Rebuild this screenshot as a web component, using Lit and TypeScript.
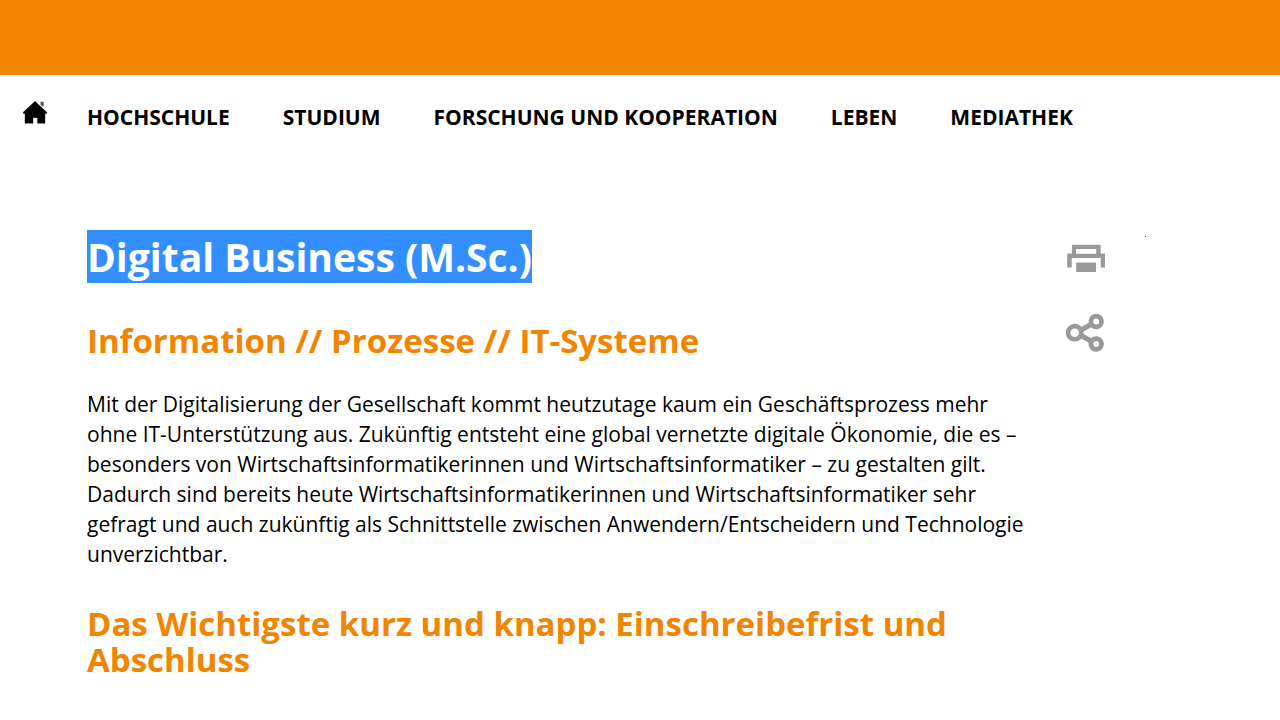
import { LitElement, html, css } from "lit";
import { customElement } from "lit/decorators.js";

const NAV = ["Hochschule", "Studium", "Forschung und Kooperation", "Leben", "Mediathek"];

@customElement("app-root")
export class AppRoot extends LitElement {
  static styles = css`
    :host {
      display: block;
      background: #fff;
      color: #000;
      font-family: "Open Sans", sans-serif;
    }
    a { color: inherit; text-decoration: none; }
    svg { display: block; }
    .banner { height: 75px; background: #f18500; }
    .nav {
      display: flex;
      align-items: flex-start;
      padding: 25px 22px 0;
    }
    .home { flex: none; width: 65px; }
    .menu {
      display: flex;
      flex-wrap: wrap;
      gap: 8px 53px;
      margin: 0;
      padding: 2px 0 0;
      list-style: none;
      font-size: 21px;
      line-height: 30px;
      font-weight: 700;
      text-transform: uppercase;
    }
    .page {
      display: flex;
      justify-content: space-between;
      padding: 98px 134px 40px 87px;
    }
    .content { flex: 1; max-width: 940px; }
    h1, h2, p { margin: 0; }
    h1 {
      font-size: 39px;
      line-height: 53px;
      font-weight: 700;
      margin-bottom: 40px;
    }
    .marked { background: #338fff; color: #fff; }
    h2 {
      color: #f18500;
      font-size: 33px;
      line-height: 36px;
      font-weight: 700;
      margin-bottom: 30px;
    }
    p {
      font-size: 21px;
      line-height: 30px;
      margin-bottom: 37px;
    }
    .side {
      flex: none;
      display: flex;
      align-items: flex-start;
      gap: 39px;
    }
    .tools {
      display: flex;
      flex-direction: column;
      gap: 40px;
      padding-top: 14px;
    }
    .dot {
      width: 1px;
      height: 1px;
      margin-top: 6px;
      background: #444;
    }
    button {
      display: block;
      padding: 0;
      border: 0;
      background: none;
      cursor: pointer;
    }
  `;

  render() {
    return html`
      <header>
        <div class="banner"></div>
        <nav class="nav">
          <a class="home" href="#" aria-label="Startseite">
            <svg width="26" height="25" viewBox="0 0 26 25">
              <path
                d="M13 1.300 L25 12.500 L24.500 13.500 H23 V23.300 H15.500 V17.700 H11 V23.300 H3 V13.500 H1.500 L1 12.500 Z"
                stroke="#000" stroke-opacity=".35" stroke-linejoin="round"
              />
              <path d="M18.500 1.800h3.200v4.400h-1.700l-1.500-1.400z" fill-opacity=".65" />
            </svg>
          </a>
          <ul class="menu">
            ${NAV.map((n) => html`<li><a href="#">${n}</a></li>`)}
          </ul>
        </nav>
      </header>
      <main class="page">
        <article class="content">
          <h1><span class="marked">Digital Business (M.Sc.)</span></h1>
          <h2>Information // Prozesse // IT-Systeme</h2>
          <p>
            Mit der Digitalisierung der Gesellschaft kommt heutzutage kaum ein Geschäftsprozess mehr
            ohne IT-Unterstützung aus. Zukünftig entsteht eine global vernetzte digitale Ökonomie, die es –
            besonders von Wirtschaftsinformatikerinnen und Wirtschaftsinformatiker – zu gestalten gilt.
            Dadurch sind bereits heute Wirtschaftsinformatikerinnen und Wirtschaftsinformatiker sehr
            gefragt und auch zukünftig als Schnittstelle zwischen Anwendern/Entscheidern und Technologie
            unverzichtbar.
          </p>
          <h2>Das Wichtigste kurz und knapp: Einschreibefrist und Abschluss</h2>
        </article>
        <aside class="side">
          <div class="tools">
            <button aria-label="Drucken">
              <svg width="40" height="30" viewBox="0 0 40 30" fill="#999">
                <path
                  fill-rule="evenodd"
                  d="M6 0.700H34.700V9.500H39V23.500H34.700V14H5.700V23.500H1.200V9.500H6zM10 5V9.700H30.200V5z"
                />
                <path d="M10.200 18.500h19.800v9.500H10.200z" />
              </svg>
            </button>
            <button aria-label="Teilen">
              <svg width="40" height="40" viewBox="0 0 40 40" fill="none" stroke="#999">
                <path stroke-width="5" d="M15 16l10-5.500M15 21.500l10 5.500" />
                <circle cx="8.700" cy="18.700" r="6.600" stroke-width="4.600" />
                <circle cx="30.200" cy="7.500" r="5.300" stroke-width="4.800" />
                <circle cx="30.200" cy="30" r="5.300" stroke-width="4.800" />
              </svg>
            </button>
          </div>
          <span class="dot"></span>
        </aside>
      </main>
    `;
  }
}
